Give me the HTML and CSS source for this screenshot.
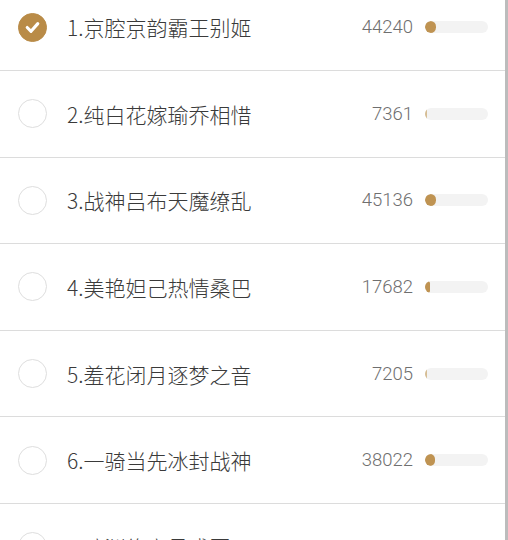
FILE: index.html
```html
<!DOCTYPE html>
<html lang="zh">
<head>
<meta charset="utf-8">
<link rel="stylesheet" href="styles.css">
</head>
<body>
<div class="page">
  <ul class="list">
    <li class="row">
      <span class="radio checked"><svg viewBox="0 0 28 28" width="28" height="28"><path d="M8.5 14.5 L12.5 18.5 L19.5 10.5" fill="none" stroke="#fff" stroke-width="3.2" stroke-linecap="round" stroke-linejoin="round"/></svg></span>
      <span class="name">1.京腔京韵霸王别姬</span>
      <span class="count">44240</span>
      <span class="track"><span class="fill" style="width:11px"></span></span>
    </li>
    <li class="row">
      <span class="radio"></span>
      <span class="name">2.纯白花嫁瑜乔相惜</span>
      <span class="count">7361</span>
      <span class="track"><span class="fill thin" style="width:2px"></span></span>
    </li>
    <li class="row">
      <span class="radio"></span>
      <span class="name">3.战神吕布天魔缭乱</span>
      <span class="count">45136</span>
      <span class="track"><span class="fill" style="width:11px"></span></span>
    </li>
    <li class="row">
      <span class="radio"></span>
      <span class="name">4.美艳妲己热情桑巴</span>
      <span class="count">17682</span>
      <span class="track"><span class="fill" style="width:5px"></span></span>
    </li>
    <li class="row">
      <span class="radio"></span>
      <span class="name">5.羞花闭月逐梦之音</span>
      <span class="count">7205</span>
      <span class="track"><span class="fill thin" style="width:2px"></span></span>
    </li>
    <li class="row">
      <span class="radio"></span>
      <span class="name">6.一骑当先冰封战神</span>
      <span class="count">38022</span>
      <span class="track"><span class="fill" style="width:10px"></span></span>
    </li>
    <li class="row">
      <span class="radio"></span>
      <span class="name">7.暗渊绝帝号惑圆</span>
      <span class="count">40000</span>
      <span class="track"><span class="fill" style="width:10px"></span></span>
    </li>
  </ul>
</div>
</body>
</html>
```
FILE: styles.css
```css
html, body {
  margin: 0;
  padding: 0;
  background: #fff;
}
.page {
  width: 505px;
  height: 540px;
  overflow: hidden;
  border-right: 3px solid #bcbcbc;
  font-family: "Noto Sans CJK SC", "Noto Sans", sans-serif;
}
.list {
  list-style: none;
  margin: -15.6px 0 0 0;
  padding: 0;
}
.row {
  box-sizing: border-box;
  height: 86.6px;
  border-bottom: 1px solid #dcdcdc;
  display: flex;
  align-items: center;
  padding: 0 17px 0 18px;
}
.radio {
  box-sizing: border-box;
  width: 29px;
  height: 29px;
  border-radius: 50%;
  border: 1.5px solid #dedede;
  flex: none;
  display: flex;
  align-items: center;
  justify-content: center;
}
.radio.checked {
  background: #b98b47;
  border-color: #b98b47;
}
.radio svg {
  display: block;
}
.name {
  margin-left: 20px;
  font-size: 21px;
  font-weight: 300;
  color: #3a3a3a;
  flex: 1;
  white-space: nowrap;
}
.count {
  font-family: "Roboto", "Noto Sans", sans-serif;
  font-size: 18.5px;
  font-weight: 300;
  color: #6f6f6f;
  margin-right: 12px;
}
.track {
  width: 63px;
  height: 12px;
  border-radius: 6px;
  background: #f3f3f3;
  display: flex;
  flex: none;
  overflow: hidden;
}
.fill {
  height: 12px;
  border-radius: 6px;
  background: #bf9352;
}
.fill.thin {
  background: #d6bd94;
  border-radius: 1px;
  height: 10px;
  margin-top: 1px;
}
```
